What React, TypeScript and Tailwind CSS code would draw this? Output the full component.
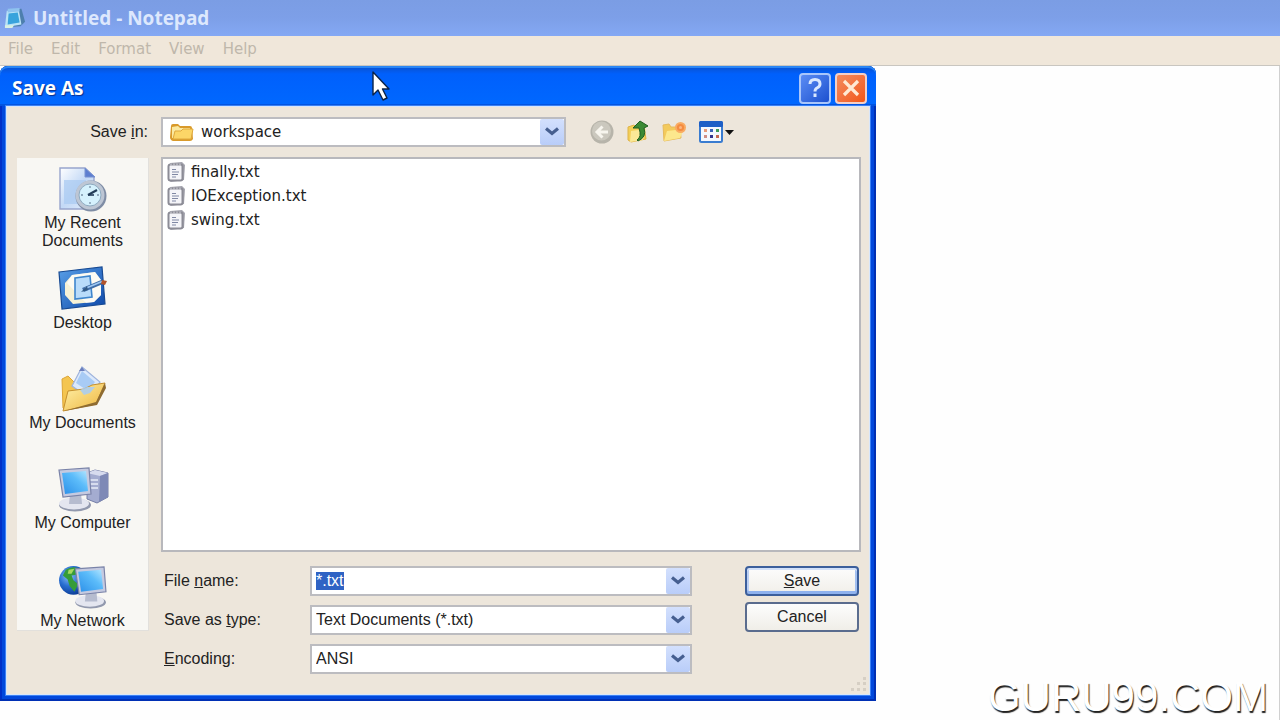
import { useEffect, useRef } from "react";
import type { ReactNode } from "react";

function NotepadIcon() {
  return (
    <svg width="22" height="24" viewBox="1 0 24 24" aria-hidden="true">
      <path d="M5 3 L20 2 L24 16 L19 21 L3 22 Z" fill="#4d7fae" />
      <path d="M4 4 L17 2 L20 19 L2 22 Z" fill="#b9e3f7" />
      <path d="M6 7 L16 6 L18 17 L5 19 Z" fill="#38a3dc" />
      <path d="M5 2 L18 1 L18 5 L5 6 Z" fill="#8fc3ef" />
      <path d="M2 20 L12 20 L10 23 L2 23 Z" fill="#d8f0e2" />
    </svg>
  );
}

function FolderIcon() {
  return (
    <svg width="26" height="20" viewBox="0 0 26 20" aria-hidden="true">
      <path d="M2 4 Q2 2 4 2 L9 2 L11 4 L21 4 Q23 4 23 6 L24 17 Q23 19 21 19 L4 19 Q1 18 1 15 Z" fill="#d99a2b" />
      <path d="M3 5 L9 4 L11 6 L21 6 L21 16 L3 16 Z" fill="#fbe9a0" />
      <path d="M6 9 L12 9 L14 7 L24 7 L22 17 L4 17 Z" fill="#fcd667" stroke="#e0a93c" strokeWidth="1" />
    </svg>
  );
}

function TextFileIcon() {
  return (
    <svg width="18" height="20" viewBox="0 0 18 20" aria-hidden="true">
      <path d="M3 1 L15 0 L18 3 L17 18 L4 20 L1 18 Z" fill="#a4a4ae" />
      <rect x="1.500" y="2.500" width="14" height="16" rx="2" fill="#f4f4f8" stroke="#8c8c96" strokeWidth="2" />
      <path d="M4 1.500 v2.500 M7 1.500 v2.500 M10 1.500 v2.500 M13 1.500 v2.500" stroke="#c9c9d0" strokeWidth="1.200" />
      <path d="M5 7.500 h4 M5 10 h7 M5 12.500 h6 M5 15 h4" stroke="#8088a4" strokeWidth="1.200" />
    </svg>
  );
}

function RecentIcon() {
  return (
    <svg width="50" height="46" viewBox="0 0 50 46" aria-hidden="true">
      <defs>
        <linearGradient id="page" x1="0" y1="0" x2="1" y2="1">
          <stop offset="0" stopColor="#ffffff" />
          <stop offset="0.5" stopColor="#c3d9f6" />
          <stop offset="1" stopColor="#e4eefc" />
        </linearGradient>
      </defs>
      <path d="M2 2 H27 L36 11 V43 H2 Z" fill="url(#page)" stroke="#98a5cd" strokeWidth="1.4" />
      <path d="M6 14 H28 V38 H6 Z" fill="#abcbf1" opacity="0.75" />
      <path d="M27 2 V11 H37 Z" fill="#5d7ed0" stroke="#7892d1" />
      <circle cx="33" cy="30" r="15.5" fill="#7f8da5" />
      <circle cx="32" cy="29" r="14.5" fill="#bdc6d4" />
      <circle cx="32" cy="29" r="11" fill="#d5f1fd" stroke="#8eaac0" strokeWidth="1" />
      <path d="M32 20 v2 M32 36 v2 M23 29 h2 M39 29 h2" stroke="#7a91a8" strokeWidth="1.3" />
      <path d="M30 29 L39 24" stroke="#233d59" strokeWidth="2.2" />
      <path d="M30 29 L36 29" stroke="#233d59" strokeWidth="1.6" />
    </svg>
  );
}

function DesktopIcon() {
  return (
    <svg width="50" height="46" viewBox="0 0 50 46" aria-hidden="true">
      <defs>
        <linearGradient id="desk" x1="0" y1="0" x2="1" y2="1">
          <stop offset="0" stopColor="#5aa0e8" />
          <stop offset="1" stopColor="#0d48a8" />
        </linearGradient>
      </defs>
      <path d="M1 6 L44 1 L47 38 L4 43 Z" fill="url(#desk)" stroke="#174a93" strokeWidth="1.2" />
      <path d="M14 9 L37 6 L43 14 V29 L36 36 L15 38 L7 29 V17 Z" fill="#f7f2d6" />
      <path d="M14 9 L37 6 L43 14 V29 L36 36 L28 37 L9 17 Z" fill="#ffffff" opacity="0.7" />
      <path d="M17 12 L32 10 L34 31 L17 33 Z" fill="#b9dcfa" stroke="#3f86cd" strokeWidth="1.6" />
      <path d="M25 24 L44 16" stroke="#3f6da7" strokeWidth="4.5" />
      <path d="M27 22.500 L44 15.500" stroke="#9fc8f2" strokeWidth="1.5" />
      <path d="M23 26 L29 20 L30 24 Z" fill="#325a85" />
      <path d="M44 14 L49 15 L47 19 L43 18 Z" fill="#b1532b" />
    </svg>
  );
}

function DocumentsIcon() {
  return (
    <svg width="50" height="46" viewBox="0 0 50 46" aria-hidden="true">
      <defs>
        <linearGradient id="fold" x1="0" y1="0" x2="1" y2="1">
          <stop offset="0" stopColor="#fff3ae" />
          <stop offset="1" stopColor="#eeb43a" />
        </linearGradient>
      </defs>
      <path d="M4 13 L10 10 L16 16 L40 20 L42 32 L8 44 L5 42 Z" fill="#f4c550" stroke="#dda638" />
      <path d="M24 1 L42 16 L31 32 L14 20 Z" fill="#dce9fb" stroke="#9fb4dd" strokeWidth="1.2" />
      <path d="M24 5 L37 16 L30 25 L18 17 Z" fill="#a8cbf5" />
      <path d="M24 1 L21 5 L27 5 Z" fill="#6c7fbd" />
      <path d="M10 25 L26 23 L34 19 L47 17 L38 38 L5 45 Z" fill="url(#fold)" stroke="#c58f2d" strokeWidth="1" />
      <path d="M22 24 L29 21 L37 21 L32 27 L26 29 Z" fill="#abcdf0" opacity="0.9" />
      <path d="M47 17 L48 22 L39 39 L6 45 L38 36 Z" fill="#8f6c31" />
    </svg>
  );
}

function Monitor({ x, y }: { x: number; y: number }) {
  return (
    <g transform={`translate(${x} ${y})`}>
      <ellipse cx="17" cy="37" rx="16" ry="6.500" fill="#9299ae" />
      <ellipse cx="16" cy="35.500" rx="15" ry="6" fill="#e4e6f0" />
      <path d="M12 26 L23 25 L24 36 L11 36 Z" fill="#b6bccf" />
      <path d="M1 2 L31 0 L33 26 L5 29 Z" fill="#c5cae0" stroke="#7a83a8" strokeWidth="1.2" />
      <path d="M4 5 L28 3 L30 23 L7 26 Z" fill="url(#screen)" />
    </g>
  );
}

function ScreenGradient() {
  return (
    <defs>
      <linearGradient id="screen" x1="0" y1="1" x2="1" y2="0">
        <stop offset="0" stopColor="#2b8fe8" />
        <stop offset="0.6" stopColor="#5cbcfa" />
        <stop offset="1" stopColor="#b4e6ff" />
      </linearGradient>
    </defs>
  );
}

function ComputerIcon() {
  return (
    <svg width="52" height="46" viewBox="0 0 52 46" aria-hidden="true">
      <ScreenGradient />
      <path d="M30 7 L38 4 L51 7 L51 31 L40 37 L30 33 Z" fill="#a4acd0" stroke="#747ea6" />
      <path d="M30 7 L38 4 L51 7 L43 10 Z" fill="#d7dbee" />
      <path d="M43 10 L51 7 L51 31 L42 36 Z" fill="#7e89b6" />
      <path d="M33 14 h8 M33 18 h8 M33 22 h8" stroke="#e8ebf7" strokeWidth="1.3" />
      <Monitor x={1} y={2} />
    </svg>
  );
}

function NetworkIcon() {
  return (
    <svg width="52" height="46" viewBox="0 0 52 46" aria-hidden="true">
      <defs>
        <radialGradient id="globe" cx="0.35" cy="0.35" r="0.7">
          <stop offset="0" stopColor="#8fc4f5" />
          <stop offset="0.5" stopColor="#2a6fd1" />
          <stop offset="1" stopColor="#0a3a94" />
        </radialGradient>
      </defs>
      <ScreenGradient />
      <circle cx="16" cy="15" r="15" fill="url(#globe)" />
      <path d="M8 4 Q15 -1 23 3 L20 9 L14 10 L16 15 L21 19 L17 27 L12 21 L10 14 L5 10 Z" fill="#369c39" />
      <path d="M11 4 L17 3 L14 8 L10 8 Z" fill="#a6d860" />
      <Monitor x={17} y={1} />
    </svg>
  );
}

function BackIcon() {
  return (
    <svg width="24" height="24" viewBox="0 0 24 24" aria-hidden="true">
      <circle cx="12" cy="12" r="11.500" fill="#b7b4aa" />
      <circle cx="11.500" cy="11" r="9.500" fill="#cbc8be" />
      <path d="M18 12 H8 M12.500 6.500 L7 12 L12.500 17.500" fill="none" stroke="#f7f5ee" strokeWidth="3" />
    </svg>
  );
}

function UpIcon() {
  return (
    <svg width="22" height="24" viewBox="0 0 22 24" aria-hidden="true">
      <path d="M1 7 L7 5 L9 7 L17 6 L19 19 L4 22 L1 20 Z" fill="#f3cf58" stroke="#dfb449" />
      <path d="M4 11 L19 9 L16 20 L3 22 Z" fill="#fae896" />
      <path d="M10 20 Q15 17 12 8 L6 8 L13 1 L21 6 L17 8 Q20 17 11 21 Z" fill="#3b8a34" stroke="#1f5f20" strokeWidth="1" />
    </svg>
  );
}

function NewFolderIcon() {
  return (
    <svg width="24" height="22" viewBox="0 0 24 22" aria-hidden="true">
      <path d="M1 4 L7 3 L9 6 L18 6 L19 17 L2 20 Z" fill="#f3ca5c" stroke="#e6ba5c" />
      <path d="M5 10 L22 8 L18 17 L2 20 Z" fill="#fce78d" />
      <circle cx="18.500" cy="6.500" r="5.500" fill="#f9ab62" />
      <circle cx="18.500" cy="6.500" r="3.600" fill="#f58c40" />
      <circle cx="18.500" cy="6.500" r="1.500" fill="#fcb680" />
    </svg>
  );
}

function ViewsIcon() {
  return (
    <svg width="35" height="22" viewBox="0 0 35 22" aria-hidden="true">
      <rect x="1" y="1" width="22" height="20" rx="1.500" fill="#f4f8fe" stroke="#3a7cd0" strokeWidth="2" />
      <rect x="0" y="0" width="24" height="6" rx="1.500" fill="#1d5fc6" />
      <rect x="5" y="8" width="3" height="3" fill="#e79a78" />
      <rect x="11" y="8" width="3" height="3" fill="#3a63b8" />
      <rect x="17" y="8" width="3" height="3" fill="#3e9c58" />
      <rect x="5" y="14" width="3" height="3" fill="#cf8f86" />
      <rect x="11" y="14" width="3" height="3" fill="#32328c" />
      <rect x="17" y="14" width="3" height="3" fill="#c56a52" />
      <path d="M26 9 H35 L30.500 14 Z" fill="#111111" />
    </svg>
  );
}

function DropArrow() {
  return (
    <span className="pointer-events-none absolute inset-y-[2px] right-[2px] flex w-6 items-center justify-center rounded-xs bg-linear-to-b from-[#d3e0fd] to-[#b9cdf9]">
      <svg width="14" height="10" viewBox="0 0 14 10" aria-hidden="true">
        <path d="M1 1.500 L7 6.500 L13 1.500" fill="none" stroke="#465f90" strokeWidth="3.200" />
      </svg>
    </span>
  );
}

const fieldClass =
  "h-[30px] w-full appearance-none rounded-none border-2 border-[#bcbcc0] bg-white pr-8 pl-1 text-[#222222] outline-none";

const places: { label: string; icon: ReactNode }[] = [
  { label: "My Recent Documents", icon: <RecentIcon /> },
  { label: "Desktop", icon: <DesktopIcon /> },
  { label: "My Documents", icon: <DocumentsIcon /> },
  { label: "My Computer", icon: <ComputerIcon /> },
  { label: "My Network", icon: <NetworkIcon /> },
];

const files = ["finally.txt", "IOException.txt", "swing.txt"];

function SaveAsDialog() {
  const nameRef = useRef<HTMLInputElement>(null);

  useEffect(() => {
    nameRef.current?.focus();
    nameRef.current?.select();
  }, []);

  return (
    <section
      role="dialog"
      aria-labelledby="dialog-title"
      className="mb-[19px] flex w-[calc(100%-403px)] min-w-[640px] flex-1 flex-col rounded-t-lg bg-[#0148dc] px-[6px] pb-[6px] font-['Liberation_Sans',sans-serif] text-base text-[#222222] shadow-[inset_0_-2px_0_#0030b4,inset_-2px_0_0_#0030b4,inset_2px_0_0_#0030c8]"
    >
      <header className="-mx-[6px] flex h-10 items-center justify-between rounded-t-lg bg-linear-to-b from-[#0a50cc] via-[#0060fc] via-20% to-[#0068ff] pt-1 pr-[9px] pl-3 shadow-[inset_0_2px_0_#2a86f4,inset_0_-2px_0_#0254e0]">
        <h1 id="dialog-title" className="font-['Open_Sans',sans-serif] text-[19px] leading-6 font-bold text-white [text-shadow:1px_1px_1px_#0a2f8c]">
          Save As
        </h1>
        <div className="flex gap-1">
          <button
            type="button"
            aria-label="Help"
            className="flex h-[31px] w-8 items-center justify-center rounded-sm border-2 border-[#a9c6fb] bg-linear-to-br from-[#5b8cf4] to-[#1c50cf]"
          >
            <svg width="18" height="22" viewBox="0 0 18 22" aria-hidden="true">
              <path d="M4 7 Q4 2.500 9 2.500 Q14 2.500 14 7 Q14 9.500 11 11 Q9 12 9 14.500" fill="none" stroke="#d9e8ff" strokeWidth="3" />
              <rect x="7.500" y="16.500" width="3" height="3.500" fill="#d9e8ff" />
            </svg>
          </button>
          <button
            type="button"
            aria-label="Close"
            className="flex h-[31px] w-8 items-center justify-center rounded-sm border-2 border-[#f3d0c8] bg-linear-to-br from-[#f28a5c] to-[#f2560f]"
          >
            <svg width="20" height="20" viewBox="0 0 20 20" aria-hidden="true">
              <path d="M3 3 L17 17 M17 3 L3 17" stroke="#ffe9d3" strokeWidth="3.200" />
            </svg>
          </button>
        </div>
      </header>

      <div className="relative flex flex-1 flex-col border border-[#d8e6fa] bg-[#ede6db] pr-2 pb-5 pl-[10px] shadow-[0_0_0_1px_#3b82f6]">
        <div className="flex items-center pt-[10px]">
          <label htmlFor="save-in" className="w-[144px] shrink-0 pr-[13px] text-right">
            Save <u>i</u>n:
          </label>
          <div className="relative w-[405px]">
            <select id="save-in" className={`${fieldClass} pl-[38px]! font-['DejaVu_Sans',sans-serif] text-[15px]`}>
              <option>workspace</option>
            </select>
            <span className="pointer-events-none absolute top-[5px] left-2">
              <FolderIcon />
            </span>
            <DropArrow />
          </div>
          <div className="ml-6 flex items-center gap-[13px]">
            <button type="button" aria-label="Back"><BackIcon /></button>
            <button type="button" aria-label="Up one level"><UpIcon /></button>
            <button type="button" aria-label="New folder"><NewFolderIcon /></button>
            <button type="button" aria-label="Views"><ViewsIcon /></button>
          </div>
        </div>

        <div className="mt-[10px] flex flex-1 gap-3">
          <nav aria-label="Places" className="mt-px flex w-[132px] shrink-0 flex-col self-start border-r border-b border-[#e2e0dc] bg-[#f8f7f3]">
            {places.map((place) => (
              <button
                key={place.label}
                type="button"
                className="flex h-[100px] flex-col items-center gap-0.5 px-1 pt-2 text-center leading-[18px] last:h-[72px]"
              >
                {place.icon}
                <span>{place.label}</span>
              </button>
            ))}
          </nav>

          <div className="flex flex-1 flex-col">
            <ul className="flex-1 border-2 border-[#b8b8bc] bg-white px-1 pt-px font-['DejaVu_Sans',sans-serif] text-[15px] leading-6">
              {files.map((file) => (
                <li key={file} className="flex items-center gap-[6px]">
                  <TextFileIcon />
                  {file}
                </li>
              ))}
            </ul>

            <form className="mt-[14px] flex gap-[53px] pr-0.5" onSubmit={(e) => e.preventDefault()}>
              <div className="grid flex-1 grid-cols-[146px_1fr] items-center gap-y-[9px] pl-[3px]">
                <label htmlFor="file-name">
                  File <u>n</u>ame:
                </label>
                <div className="relative">
                  <input
                    id="file-name"
                    ref={nameRef}
                    defaultValue="*.txt"
                    className={`${fieldClass} selection:bg-[#2f63c4] selection:text-white`}
                  />
                  <DropArrow />
                </div>
                <label htmlFor="file-type">
                  Save as <u>t</u>ype:
                </label>
                <div className="relative">
                  <select id="file-type" className={fieldClass}>
                    <option>Text Documents (*.txt)</option>
                  </select>
                  <DropArrow />
                </div>
                <label htmlFor="encoding">
                  <u>E</u>ncoding:
                </label>
                <div className="relative">
                  <select id="encoding" className={fieldClass}>
                    <option>ANSI</option>
                  </select>
                  <DropArrow />
                </div>
              </div>
              <div className="flex w-[114px] flex-col gap-[6px]">
                <button
                  type="submit"
                  className="h-[30px] rounded-sm border-2 border-[#3c5f9c] bg-linear-to-b from-[#fcfcfc] to-[#f1efe9] shadow-[inset_0_-3px_0_#8fb2ee,inset_0_2px_0_#d3e1f9,inset_2px_0_0_#bcd0f4,inset_-2px_0_0_#a3c0f0]"
                >
                  <u>S</u>ave
                </button>
                <button
                  type="button"
                  className="h-[30px] rounded-sm border-2 border-[#5a6c8e] bg-linear-to-b from-[#fdfdfd] to-[#f0eee8]"
                >
                  Cancel
                </button>
              </div>
            </form>
          </div>
        </div>

        <svg className="absolute right-0.5 bottom-0.5" width="16" height="16" viewBox="0 0 16 16" aria-hidden="true">
          <path d="M12 1h3v3h-3z M6 6h3v3h-3z M12 6h3v3h-3z M0 12h3v3h-3z M6 12h3v3h-3z M12 12h3v3h-3z" fill="#d6cfc4" />
        </svg>
      </div>
    </section>
  );
}

export default function App() {
  return (
    <div className="relative flex min-h-screen flex-col bg-[#fefefe]">
      <header className="flex h-9 items-center gap-[7px] bg-linear-to-b from-[#7b9de4] via-[#7d9fe8] to-[#84a8f4] pl-1 font-['Open_Sans',sans-serif] text-[19px] leading-6 font-bold text-[#dde8fd]">
        <NotepadIcon />
        Untitled - Notepad
      </header>
      <nav
        aria-label="Menu"
        className="flex h-[30px] items-center gap-[18px] border-b border-[#c9c6c0] bg-[#f0e7da] px-2 pb-0.5 font-['DejaVu_Sans',sans-serif] text-[15px] text-[#bfb7ab]"
      >
        <button type="button">File</button>
        <button type="button">Edit</button>
        <button type="button">Format</button>
        <button type="button">View</button>
        <button type="button">Help</button>
      </nav>
      <main className="flex flex-1 flex-col border-r border-[#d0d0d0]">
        <SaveAsDialog />
      </main>
      <svg className="pointer-events-none absolute top-[70px] left-[371px]" width="20" height="32" viewBox="0 0 20 32" aria-hidden="true">
        <path d="M2 2 V25 L7 20 L12 30 L16 28 L11.500 19 H18 Z" fill="#ffffff" stroke="#0b2348" strokeWidth="1.400" strokeLinejoin="round" />
      </svg>
      <p className="pointer-events-none absolute right-3 bottom-0.5 font-['Liberation_Sans',sans-serif] text-[42px] leading-[42px] text-white [text-shadow:1px_2px_1px_#222222]">
        GURU99.COM
      </p>
    </div>
  );
}
